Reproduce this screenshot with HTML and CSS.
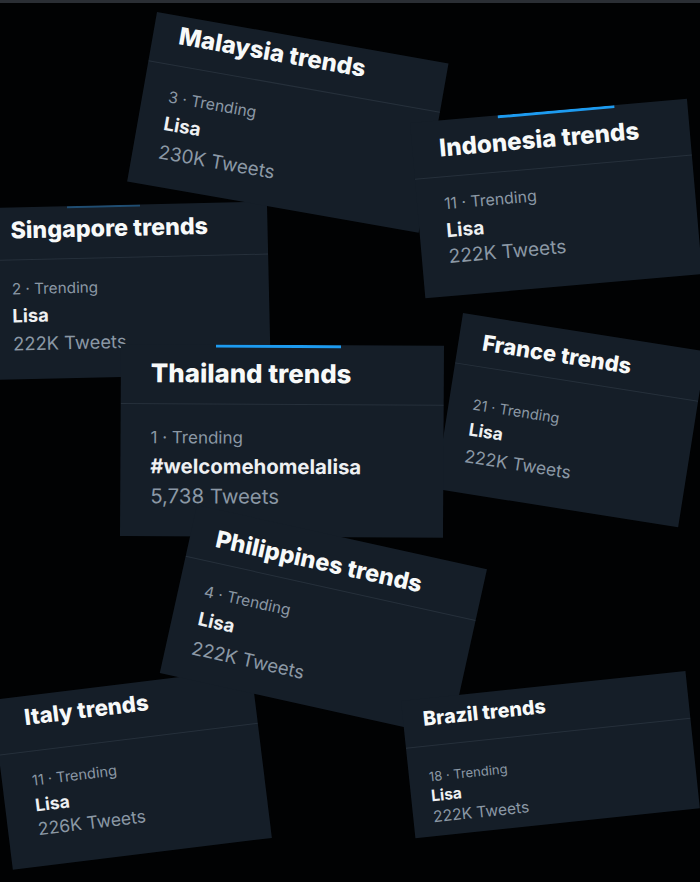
FILE: index.html
```html
<!DOCTYPE html>
<html lang="en">
<head>
<meta charset="utf-8">
<title>Lisa trends</title>
<link rel="stylesheet" href="styles.css">
</head>
<body>
<main class="canvas">
  <div class="edge"></div>

  <article class="card sg">
    <div class="bar bar-dim"></div>
    <header class="head"><h2 class="title">Singapore trends</h2></header>
    <div class="body">
      <p class="rank">2 · Trending</p>
      <p class="name">Lisa</p>
      <p class="count">222K Tweets</p>
    </div>
  </article>

  <article class="card my">
    <header class="head"><h2 class="title">Malaysia trends</h2></header>
    <div class="body">
      <p class="rank">3 · Trending</p>
      <p class="name">Lisa</p>
      <p class="count">230K Tweets</p>
    </div>
  </article>

  <article class="card id">
    <div class="bar"></div>
    <header class="head"><h2 class="title">Indonesia trends</h2></header>
    <div class="body">
      <p class="rank">11 · Trending</p>
      <p class="name">Lisa</p>
      <p class="count">222K Tweets</p>
    </div>
  </article>

  <article class="card fr">
    <header class="head"><h2 class="title">France trends</h2></header>
    <div class="body">
      <p class="rank">21 · Trending</p>
      <p class="name">Lisa</p>
      <p class="count">222K Tweets</p>
    </div>
  </article>

  <article class="card th">
    <div class="bar"></div>
    <header class="head"><h2 class="title">Thailand trends</h2></header>
    <div class="body">
      <p class="rank">1 · Trending</p>
      <p class="name">#welcomehomelalisa</p>
      <p class="count">5,738 Tweets</p>
    </div>
  </article>

  <article class="card it">
    <header class="head"><h2 class="title">Italy trends</h2></header>
    <div class="body">
      <p class="rank">11 · Trending</p>
      <p class="name">Lisa</p>
      <p class="count">226K Tweets</p>
    </div>
  </article>

  <article class="card ph">
    <header class="head"><h2 class="title">Philippines trends</h2></header>
    <div class="body">
      <p class="rank">4 · Trending</p>
      <p class="name">Lisa</p>
      <p class="count">222K Tweets</p>
    </div>
  </article>

  <article class="card br">
    <header class="head"><h2 class="title">Brazil trends</h2></header>
    <div class="body">
      <p class="rank">18 · Trending</p>
      <p class="name">Lisa</p>
      <p class="count">222K Tweets</p>
    </div>
  </article>
</main>
</body>
</html>
```

FILE: styles.css
```css
html, body {
  margin: 0;
  padding: 0;
  background: #000;
}

.canvas {
  position: relative;
  width: 700px;
  height: 882px;
  overflow: hidden;
  background: #010203;
  font-family: Inter, "Liberation Sans", sans-serif;
}

.edge {
  height: 3px;
  background: #2a2e34;
}

.card {
  position: absolute;
  box-sizing: border-box;
  background: #151e28;
  transform-origin: 0 0;
  overflow: hidden;
  font-size: var(--f);
  --r: 1;
}

.bar {
  position: absolute;
  top: 0;
  height: 3px;
  background: #1d9bf0;
}

.bar-dim {
  background: #1f4d72;
  height: 2px;
}

.head {
  box-sizing: border-box;
  height: var(--hh);
  padding: var(--ht) var(--px) 0;
  border-bottom: 1px solid #26303b;
}

.title {
  margin: 0;
  font-size: 1.52em;
  line-height: 1.2;
  font-weight: 800;
  color: #f7f9f9;
  white-space: nowrap;
  letter-spacing: 0;
}

.body {
  padding: var(--bt) var(--px) 0;
}

.rank, .name, .count {
  margin: 0;
  white-space: nowrap;
}

.rank {
  font-size: 1em;
  line-height: calc(1.6 * var(--r));
  color: #8b98a5;
}

.name {
  font-size: 1.2em;
  line-height: calc(1.485 * var(--r));
  font-weight: 700;
  color: #eef0f2;
}

.count {
  font-size: 1.2em;
  line-height: calc(1.45 * var(--r));
  color: #8b98a5;
}

/* Singapore */
.sg {
  left: -15px; top: 208px; width: 282px; height: 172px;
  transform: rotate(-1.3deg);
  --f: 15.3px; --ht: 9px; --hh: 53px; --bt: 16px; --px: 25px; --r: 1.04;
}
.sg .bar { left: 82px; width: 73px; }

/* Malaysia */
.my {
  left: 157px; top: 12px; width: 296px; height: 172px;
  transform: rotate(10deg);
  --f: 15.8px; --ht: 6px; --hh: 50px; --bt: 19px; --px: 26px; --r: 1.03;
}

/* Indonesia */
.id {
  left: 410px; top: 123px; width: 278px; height: 176px;
  transform: rotate(-5deg);
  --f: 15.9px; --ht: 13px; --hh: 57px; --bt: 15px; --px: 27px; --r: 0.97;
}
.id .bar { left: 88px; width: 117px; }

/* France */
.fr {
  left: 463px; top: 313px; width: 246px; height: 178px;
  transform: rotate(9deg);
  --f: 14.5px; --ht: 13px; --hh: 51px; --bt: 26px; --px: 24px; --r: 1.04;
}

/* Thailand */
.th {
  left: 121px; top: 344px; width: 323px; height: 192px;
  transform: rotate(0.3deg);
  --f: 17px; --ht: 13px; --hh: 60px; --bt: 20px; --px: 30px; --r: 1;
}
.th .bar { left: 95px; width: 125px; }

/* Italy */
.it {
  left: -8px; top: 700px; width: 261px; height: 171px;
  transform: rotate(-7deg);
  --f: 14.6px; --ht: 8px; --hh: 56px; --bt: 18px; --px: 30px; --r: 0.98;
}

/* Philippines */
.ph {
  left: 197px; top: 505px; width: 297px; height: 172px;
  transform: rotate(12.5deg);
  --f: 15.5px; --ht: 15px; --hh: 53px; --bt: 17px; --px: 26px; --r: 1.06;
}

/* Brazil */
.br {
  left: 401px; top: 701px; width: 286px; height: 138px;
  transform: rotate(-6deg);
  --f: 13px; --ht: 9px; --hh: 48px; --bt: 21px; --px: 20px; --r: 0.9;
}
```
